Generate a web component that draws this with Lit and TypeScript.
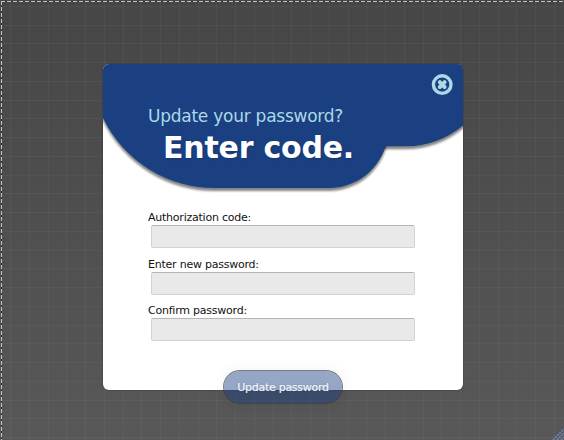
import { LitElement, html, css, svg } from "lit";
import { customElement } from "lit/decorators.js";

const FIELDS = ["Authorization code:", "Enter new password:", "Confirm password:"];

@customElement("app-root")
export class AppRoot extends LitElement {
  static styles = css`
    :host { display: block; }
    * { box-sizing: border-box; }
    .page {
      position: relative;
      width: 564px;
      height: 440px;
      overflow: hidden;
      display: flex;
      justify-content: center;
      align-items: flex-start;
      padding: 64px 0 0 2px;
      background: linear-gradient(#464646, #585858);
      font-family: Verdana, "DejaVu Sans", sans-serif;
    }
    .grid { position: absolute; inset: 0; width: 564px; height: 440px; }
    .dialog {
      position: relative;
      width: 360px;
      height: 326px;
      border-radius: 6px;
      background: #fff;
      box-shadow: 0 0 2px rgba(0, 0, 0, 0.4);
      display: flex;
      flex-direction: column;
    }
    .art { position: absolute; left: 0; top: 0; border-radius: 6px 6px 0 0; }
    .head { position: relative; flex: none; height: 146px; padding: 41px 0 0 45px; color: #add8e6; }
    .small { font-size: 17px; line-height: 22px; letter-spacing: -0.25px; white-space: nowrap; }
    .big {
      padding: 1px 0 0 15px;
      font-size: 30px;
      line-height: 40px;
      letter-spacing: -0.22px;
      font-weight: bold;
      color: #fff;
      white-space: nowrap;
      text-shadow: 1px 1px 2px rgba(0, 0, 0, 0.15);
    }
    .field { flex: none; height: 46.5px; padding-left: 45px; display: flex; flex-direction: column; }
    .label { flex: none; height: 14px; font-size: 11px; line-height: 16px; letter-spacing: -0.23px; color: #111; white-space: nowrap; }
    .input {
      width: 264px;
      height: 23px;
      flex: none;
      margin: 1px 0 0 3px;
      border: 1px solid #d2d2d2;
      border-top-color: #b5b5b5;
      border-radius: 2px;
      background: #e9e9e9;
      padding: 0;
    }
    .submit {
      width: 120px;
      height: 34px;
      flex: none;
      margin: 20.5px 0 0 120px;
      padding: 1px 0 0;
      border: 1px solid rgba(50, 55, 65, 0.65);
      border-radius: 17px;
      background: rgba(26, 64, 130, 0.46);
      background-clip: padding-box;
      box-shadow: 0 0 14px rgba(0, 0, 0, 0.06);
      color: #f3f5fa;
      font: 11px Verdana, "DejaVu Sans", sans-serif;
      letter-spacing: -0.27px;
      -webkit-text-stroke: 0.2px #f3f5fa;
      text-shadow: 0 0 2px rgba(30, 45, 90, 0.4);
      white-space: nowrap;
    }
  `;

  render() {
    const cols = Array.from({ length: 30 }, (_, i) => Math.round(10.2 + i * 18.75));
    const rows = Array.from({ length: 24 }, (_, i) => Math.round(5.9 + i * 18.75));
    return html`
      <div class="page">
        <svg class="grid" viewBox="0 0 564 440">
          <g fill="#fff" fill-opacity="0.04">
            ${cols.map((x) => svg`<rect x=${x} y="0" width="1" height="440" />`)}
            ${rows.map((y) => svg`<rect x="0" y=${y} width="564" height="1" />`)}
          </g>
          <path d="M1 1.5H564M1.5 1V440" fill="none" stroke="#333" />
          <path d="M1 1.5H564M1.5 1V440" fill="none" stroke="#c4c4c4" stroke-dasharray="4 2" />
          <path d="M553 440L564 429M557 440L564 433M561 440L564 437" fill="none" stroke="#7189c0" stroke-width="1.5" stroke-dasharray="2 1" />
        </svg>
        <div class="dialog">
          <svg class="art" width="360" height="135" viewBox="0 0 360 135">
            <defs>
              <filter id="sh" x="-10%" y="-10%" width="120%" height="130%" color-interpolation-filters="sRGB">
                <feDropShadow dx="0" dy="3" stdDeviation="1.3" flood-color="#000" flood-opacity="0.48" />
              </filter>
            </defs>
            <path filter="url(#sh)" fill="#1a4082" d="M270 -8H370V54L360 61.5A92 92 0 0 1 302 82.3H270Z" />
            <path filter="url(#sh)" fill="#1a4082" d="M-8 -8H285V72A60 60 0 0 1 228 124H113A124 124 0 0 1 0 54L-8 40Z" />
            <path fill="#1a4082" d="M270 0H360V61A92 92 0 0 1 302 82H270Z" />
            <circle cx="339.2" cy="20.6" r="8.8" fill="none" stroke="#add8e6" stroke-width="3.4" />
            <path d="M336.8 18.2L341.6 23M341.6 18.2L336.8 23" stroke="#add8e6" stroke-width="4" stroke-linecap="round" />
          </svg>
          <div class="head">
            <div class="small">Update your password?</div>
            <div class="big">Enter code.</div>
          </div>
          ${FIELDS.map(
            (f) => html`<div class="field">
              <label class="label">${f}</label>
              <input class="input" aria-label=${f} />
            </div>`
          )}
          <button class="submit">Update password</button>
        </div>
      </div>
    `;
  }
}
